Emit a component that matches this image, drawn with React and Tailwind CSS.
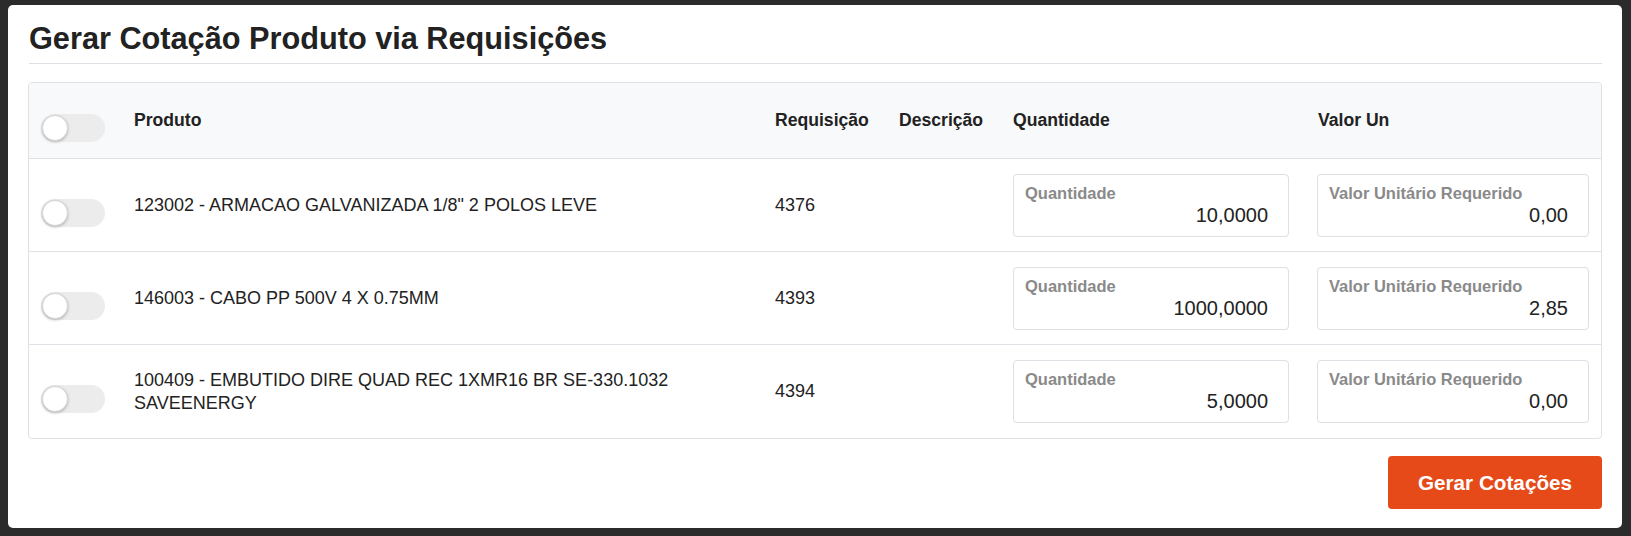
import React from "react";

const rows = [
  { produto: '123002 - ARMACAO GALVANIZADA 1/8" 2 POLOS LEVE', req: "4376", qtd: "10,0000", valor: "0,00" },
  { produto: "146003 - CABO PP 500V 4 X 0.75MM", req: "4393", qtd: "1000,0000", valor: "2,85" },
  { produto: "100409 - EMBUTIDO DIRE QUAD REC 1XMR16 BR SE-330.1032 SAVEENERGY", req: "4394", qtd: "5,0000", valor: "0,00" },
];

const grid = "grid grid-cols-[93px_641px_124px_114px_305px_1fr] items-center";

function Toggle() {
  return (
    <div className="relative mt-[15px] h-[28px] w-[64px] rounded-full bg-[#ececec]">
      <div className="absolute left-[1px] top-[1px] h-[26px] w-[26px] rounded-full border border-[#d6d6d6] bg-white shadow-[0_1px_3px_rgba(0,0,0,0.25)]" />
    </div>
  );
}

function Field({ label, value }) {
  return (
    <div className="flex h-[63px] flex-col justify-between rounded-[4px] border border-[#dcdfe3] bg-white pb-[10px] pl-[11px] pr-[20px] pt-[8px]">
      <div className="text-[16.5px] font-bold leading-[20px] text-[#8a8a8a]">{label}</div>
      <div className="text-right text-[20px] leading-[24px] text-[#222]">{value}</div>
    </div>
  );
}

export default function App() {
  return (
    <div
      className="h-[536px] w-full bg-[#2b2b2b] pb-[9px] pl-[8px] pr-[9px] pt-[5px]"
      style={{ fontFamily: '"Liberation Sans", Arial, sans-serif' }}
    >
      <div className="flex h-[523px] flex-col rounded-[5px] bg-white px-[20px] pt-[17px]">
        <h1 className="ml-[1px] border-b border-[#dcdfe3] pb-[7px] text-[30.7px] font-bold leading-[34px] text-[#222]">
          Gerar Cotação Produto via Requisições
        </h1>
        <div className="mt-[18px] rounded-[4px] border border-[#dee2e6]">
          <div className={`${grid} h-[76px] rounded-t-[4px] border-b border-[#dee2e6] bg-[#f8f9fa] text-[17.6px] font-bold text-[#222]`}>
            <div className="pl-3"><Toggle /></div>
            <div className="pl-3">Produto</div>
            <div className="pl-3">Requisição</div>
            <div className="pl-3">Descrição</div>
            <div className="pl-3">Quantidade</div>
            <div className="pl-3">Valor Un</div>
          </div>
          {rows.map((r, i) => (
            <div
              key={i}
              className={`${grid} h-[93px] text-[18px] leading-[23px] text-[#222] ${i < rows.length - 1 ? "border-b border-[#dee2e6]" : ""}`}
            >
              <div className="pl-3"><Toggle /></div>
              <div className="pl-3 pr-4">{r.produto}</div>
              <div className="pl-3">{r.req}</div>
              <div className="pl-3"></div>
              <div className="pl-3 pr-[17px]"><Field label="Quantidade" value={r.qtd} /></div>
              <div className="pl-[11px] pr-[12px]"><Field label="Valor Unitário Requerido" value={r.valor} /></div>
            </div>
          ))}
        </div>
        <div className="mt-[17px] flex justify-end">
          <button className="flex h-[53px] w-[214px] items-center justify-center rounded-[4px] bg-[#e64a19] text-[20.7px] font-bold text-white">
            Gerar Cotações
          </button>
        </div>
      </div>
    </div>
  );
}
